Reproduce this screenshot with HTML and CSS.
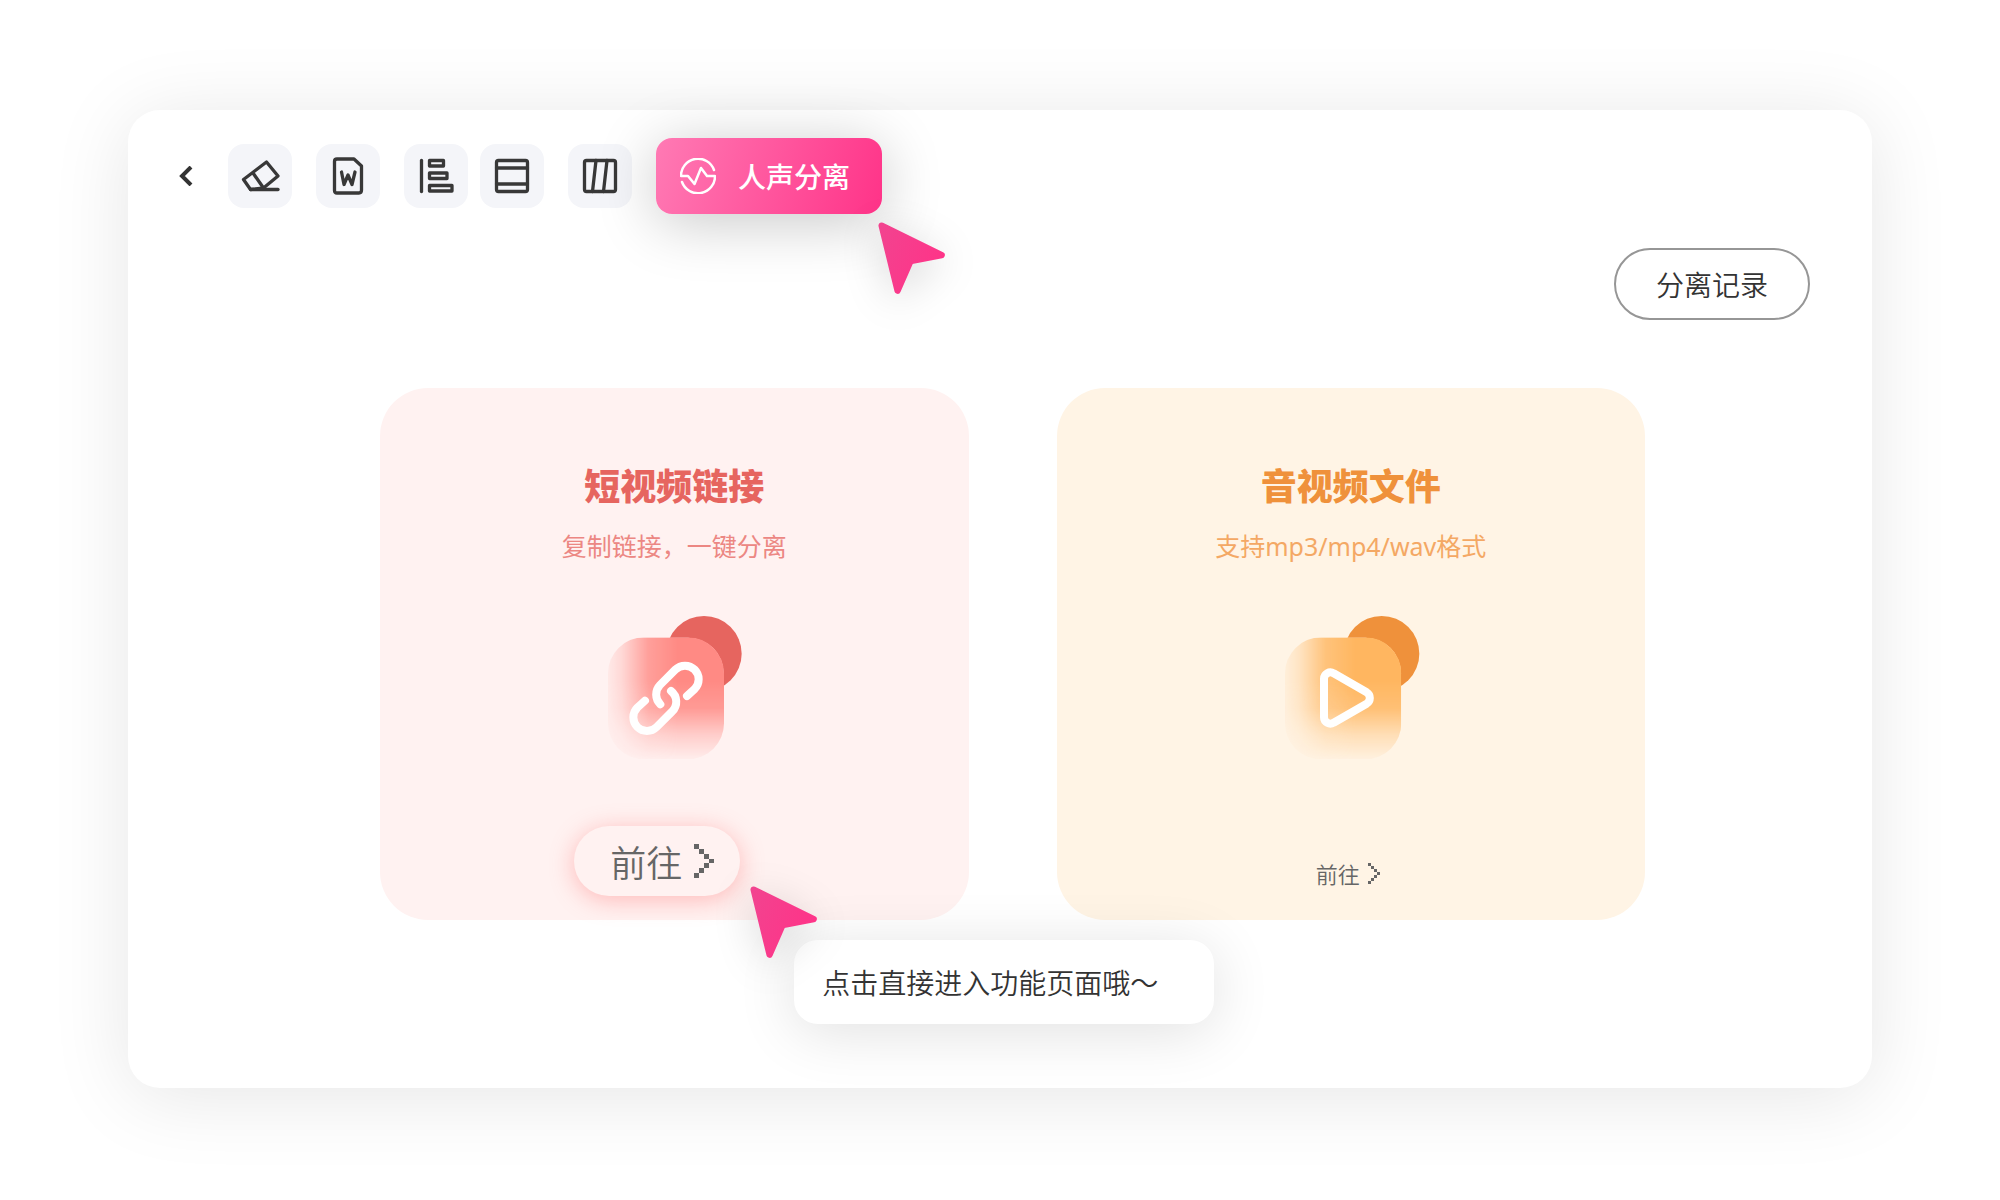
FILE: index.html
```html
<!DOCTYPE html>
<html lang="zh-CN">
<head>
    <meta charset="UTF-8">
    <title>人声分离</title>
    <link rel="stylesheet" href="styles.css">
</head>
<body>
    <!-- shared shapes -->
    <svg class="defs" aria-hidden="true">
        <defs>
            <linearGradient id="cursorFill" gradientUnits="userSpaceOnUse" x1="1254" y1="340" x2="1456" y2="430">
                <stop offset="0" stop-color="#f2438f"/>
                <stop offset="1" stop-color="#ff3388"/>
            </linearGradient>
            <linearGradient id="fadeX" x1="0" y1="0" x2="1" y2="0">
                <stop offset="0" stop-color="#fff" stop-opacity="0.08"/>
                <stop offset="0.12" stop-color="#fff" stop-opacity="0.25"/>
                <stop offset="0.35" stop-color="#fff" stop-opacity="0.8"/>
                <stop offset="0.6" stop-color="#fff"/>
            </linearGradient>
            <linearGradient id="fadeY" x1="0" y1="0" x2="0" y2="1">
                <stop offset="0.36" stop-color="#fff"/>
                <stop offset="0.58" stop-color="#fff" stop-opacity="0.85"/>
                <stop offset="0.8" stop-color="#fff" stop-opacity="0.35"/>
                <stop offset="1" stop-color="#fff" stop-opacity="0.04"/>
            </linearGradient>
            <mask id="maskX" maskContentUnits="objectBoundingBox"><rect width="1" height="1" fill="url(#fadeX)"/></mask>
            <mask id="maskY" maskContentUnits="objectBoundingBox"><rect width="1" height="1" fill="url(#fadeY)"/></mask>
            <symbol id="cursor" viewBox="1254 305 202 217">
                <path d="M1265 316 L1446 405 L1352 423 L1313 512 Z" fill="url(#cursorFill)" stroke="url(#cursorFill)" stroke-width="19" stroke-linejoin="round"/>
            </symbol>
            <symbol id="pixelArrow" viewBox="0 0 4 7">
                <path d="M0 0h1v1h-1zM1 1h1v1h-1zM2 2h1v1h-1zM3 3h1v1h-1zM2 4h1v1h-1zM1 5h1v1h-1zM0 6h1v1h-1z" fill="currentColor"/>
            </symbol>
        </defs>
    </svg>

    <main class="panel">
        <nav class="toolbar">
            <button class="back-btn" aria-label="返回">
                <svg viewBox="0 0 12 20"><path d="M11 1 L2 10 L11 19"/></svg>
            </button>
            <button class="tool-btn" aria-label="擦除">
                <svg viewBox="0 0 64 64"><path d="M38.5 18 L50 32 L35.5 44 L22.5 45.5 L15.5 35.5 Z M25 29 L35.5 44"/><path d="M22.5 45.5 H50"/></svg>
            </button>
            <button class="tool-btn" aria-label="文档">
                <svg viewBox="0 0 64 64"><path d="M21 15 H38 L45.5 22 V46 Q45.5 49 43 49 H21 Q18.5 49 18.5 46.5 V17.5 Q18.5 15 21 15 Z"/><path d="M25.5 28 L28 40.5 L32 31 L36 40.5 L39 28"/></svg>
            </button>
            <button class="tool-btn" aria-label="对齐">
                <svg viewBox="0 0 64 64"><path d="M17.5 16.5 V47.5"/><path d="M25.5 16.5 H39.5 V22 H25.5 Z M25.5 29 H43 V34.5 H25.5 Z M25.5 41.5 H48 V47 H25.5 Z"/></svg>
            </button>
            <button class="tool-btn tool-btn-near" aria-label="边框">
                <svg viewBox="0 0 64 64"><rect x="16.5" y="16.5" width="31" height="31" rx="2"/><path d="M16.5 24 H47.5 M16.5 40 H47.5"/></svg>
            </button>
            <button class="tool-btn" aria-label="分栏">
                <svg viewBox="0 0 64 64"><rect x="16.5" y="16.5" width="31" height="31" rx="2"/><path d="M28 16.5 L24.5 47.5 M39 16.5 L35.5 47.5"/></svg>
            </button>
            <button class="active-btn">
                <svg viewBox="0 0 36 36"><path d="M34 12 A17 17 0 0 0 1 18 H8 L14.5 26 L21 10 L27 18 H35 A17 17 0 0 1 2 24"/></svg>
                人声分离
                <svg class="cursor cursor-toolbar" aria-hidden="true"><use href="#cursor"/></svg>
            </button>
        </nav>

        <div class="actions">
            <button class="record-btn">分离记录</button>
        </div>

        <div class="cards">
            <section class="card card-link">
                <h2>短视频链接</h2>
                <p>复制链接，一键分离</p>
                <svg class="art" viewBox="102 78 420 432">
                    <circle cx="402" cy="191" r="113" fill="#e6655f"/>
                    <rect class="art-base" x="115" y="143" width="346" height="364" rx="107"/>
                    <g mask="url(#maskX)"><g mask="url(#maskY)">
                        <rect x="114" y="142" width="348" height="366" rx="108" fill="#ff8a84"/>
                    </g></g>
                    <path class="art-line" d="M351 318 L374 297 A41 41 0 0 0 316 239 L270 285 A41 41 0 0 0 271 343 M225 332 L202 353 A41 41 0 0 0 260 411 L306 365 A41 41 0 0 0 303 303"/>
                </svg>
                <a class="go go-hover" href="#link">前往 <svg><use href="#pixelArrow"/></svg></a>
                <svg class="cursor cursor-card" aria-hidden="true"><use href="#cursor"/></svg>
                <div class="tooltip" role="tooltip">点击直接进入功能页面哦～</div>
            </section>
            <section class="card card-file">
                <h2>音视频文件</h2>
                <p>支持mp3/mp4/wav格式</p>
                <svg class="art" viewBox="90 78 420 432">
                    <circle cx="392" cy="191" r="113" fill="#ef913b"/>
                    <rect class="art-base" x="103" y="143" width="347" height="364" rx="107"/>
                    <g mask="url(#maskX)"><g mask="url(#maskY)">
                        <rect x="102" y="142" width="349" height="366" rx="108" fill="#ffb660"/>
                    </g></g>
                    <path class="art-line" d="M219 266 A19 19 0 0 1 248 250 L347 307 A20 20 0 0 1 347 341 L248 398 A19 19 0 0 1 219 382 Z"/>
                </svg>
                <a class="go" href="#file">前往 <svg><use href="#pixelArrow"/></svg></a>
            </section>
        </div>
    </main>
</body>
</html>
```

FILE: styles.css
```css
* { box-sizing: border-box; }
body {
    margin: 0;
    padding: 110px 128px;
    background: #fff;
    color: #333;
    font-family: "Noto Sans CJK SC", sans-serif;
    font-size: 28px;
    font-weight: 350;
}
button { font: inherit; color: inherit; border: none; background: none; padding: 0; cursor: pointer; }
svg { display: block; fill: none; stroke-linecap: round; stroke-linejoin: round; }
.defs { position: absolute; width: 0; height: 0; }

.panel {
    padding: 28px 62px 168px 48px;
    border-radius: 32px;
    background: #fff;
    box-shadow: 0 8px 80px rgba(0,0,0,0.1);
}

/* toolbar */
.toolbar { display: flex; align-items: center; gap: 24px; }
.back-btn { width: 28px; height: 64px; display: flex; align-items: center; }
.back-btn svg { width: 20px; height: 20px; stroke: #333; stroke-width: 4; stroke-linecap: butt; stroke-linejoin: miter; }
.tool-btn { width: 64px; height: 64px; border-radius: 16px; background: #f4f5f9; }
.tool-btn svg { width: 64px; height: 64px; stroke: #383838; stroke-width: 3.3; }
.tool-btn-near { margin-left: -12px; }
.active-btn {
    position: relative;
    display: flex;
    align-items: center;
    gap: 22px;
    height: 76px;
    padding: 0 32px 0 24px;
    border-radius: 16px;
    background: linear-gradient(108deg, #ff7ab4, #ff3388);
    box-shadow: 0 8px 60px rgba(0,0,0,0.22);
    color: #fff;
    font-weight: 500;
}
.active-btn > svg:first-child { width: 36px; height: 36px; stroke: #fff; stroke-width: 2.5; }

/* mouse pointers */
.cursor { position: absolute; width: 67px; height: 72px; overflow: visible; filter: drop-shadow(0 8px 20px rgba(0,0,0,0.16)); }
.cursor-toolbar { left: 222px; top: 84px; }
.cursor-card { left: calc(50% + 76px); top: 498px; z-index: 2; }

.actions { display: flex; justify-content: flex-end; margin-top: 34px; }
.record-btn { width: 196px; height: 72px; border: 2px solid #969696; border-radius: 36px; }

/* cards */
.cards { display: flex; gap: 88px; margin-top: 68px; padding: 0 165px 0 204px; }
.card {
    position: relative;
    flex: 1;
    display: flex;
    flex-direction: column;
    align-items: center;
    padding: 70px 24px 24px;
    border-radius: 48px;
}
.card h2 { margin: 0; font-size: 36px; line-height: 52px; font-weight: 900; }
.card p { margin: 18px 0 52px; font-family: "Noto Sans", "Noto Sans CJK SC", sans-serif; font-size: 25px; line-height: 36px; font-weight: 400; }
.card-link { background: #fff2f1; z-index: 1; }
.card-link h2 { color: #e6655f; }
.card-link p { color: #ec8783; }
.card-file { background: #fff4e5; }
.card-file h2 { color: #ef913b; }
.card-file p { color: #f4a864; }
.art { width: 140px; height: 144px; }
.art-base { fill: #fff2f1; }
.card-file .art-base { fill: #fff4e5; }
.art-line { stroke: #fff; stroke-width: 24; }

.go {
    display: flex;
    align-items: center;
    gap: 8px;
    margin: 98px 6px 0 0;
    color: #666;
    font-size: 22px;
    line-height: 30px;
    text-decoration: none;
}
.go svg { width: 12px; height: 21px; shape-rendering: crispEdges; }
.go-hover {
    gap: 12px;
    height: 70px;
    margin: 66px 34px 0 0;
    padding: 0 26px 0 36px;
    border-radius: 35px;
    background: #fff2f1;
    box-shadow: 0 4px 24px rgba(255,100,100,0.4);
    font-size: 36px;
}
.go-hover svg { width: 20px; height: 34px; }

.tooltip {
    position: absolute;
    left: calc(50% + 120px);
    top: 552px;
    width: 420px;
    padding: 22px 28px;
    border-radius: 24px;
    background: #fff;
    box-shadow: 0 8px 60px rgba(0,0,0,0.12);
    line-height: 40px;
}
```
